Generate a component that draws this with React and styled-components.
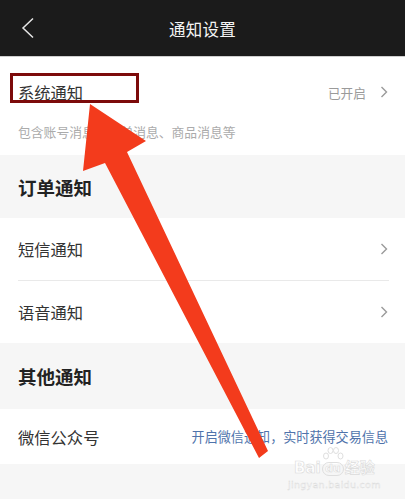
import React from 'react'
import styled, { createGlobalStyle } from 'styled-components'

const Global = createGlobalStyle`
  html, body {
    margin: 0;
    padding: 0;
    background: #f6f6f6;
  }
  body {
    font-family: "Noto Sans CJK SC", "Noto Sans", sans-serif;
  }
`

function Chevron({ color = '#9a9a9a' }) {
  return (
    <svg width="8" height="12" viewBox="0 0 8 12">
      <polyline points="1.5,1 6.5,6 1.5,11" fill="none" stroke={color} strokeWidth="1.4" />
    </svg>
  )
}

function App() {
  return (
    <Page>
      <Global />
      <Header>
        <BackBtn>
          <svg width="14" height="22" viewBox="0 0 14 22">
            <polyline points="12,1.5 2,11 12,20.5" fill="none" stroke="#e6e6e6" strokeWidth="1.5" />
          </svg>
        </BackBtn>
        <Title>通知设置</Title>
      </Header>

      <SystemItem>
        <TitleRow>
          <ItemTitle>
            系统通知
            <Highlight />
          </ItemTitle>
          <Status>
            已开启
            <Chevron />
          </Status>
        </TitleRow>
        <Desc>包含账号消息、订单消息、商品消息等</Desc>
      </SystemItem>

      <GroupHeader $h={63}>订单通知</GroupHeader>
      <Row $h={62}>
        <ItemTitle>短信通知</ItemTitle>
        <Chevron />
      </Row>
      <Divider />
      <Row $h={62}>
        <ItemTitle>语音通知</ItemTitle>
        <Chevron />
      </Row>

      <GroupHeader $h={66}>其他通知</GroupHeader>
      <Row $h={55}>
        <ItemTitle>微信公众号</ItemTitle>
        <LinkText>开启微信通知，实时获得交易信息</LinkText>
      </Row>

      <Arrow width="405" height="499" viewBox="0 0 405 499">
        <polygon
          points="90,104 146,141 127,152 268,451 259,458 105,163 83,171"
          fill="#f33b1c"
        />
      </Arrow>

      <Watermark>
        <Logo>
          <span>Bai</span>
          <Paw>
            <svg width="22" height="16" viewBox="0 0 22 16">
              <g fill="#fff" stroke="#dcdcdc" strokeWidth="1">
                <ellipse cx="4" cy="10" rx="2.5" ry="3" />
                <ellipse cx="8.5" cy="4.5" rx="2.5" ry="3" />
                <ellipse cx="14" cy="4.5" rx="2.5" ry="3" />
                <ellipse cx="18.5" cy="10" rx="2.5" ry="3" />
              </g>
            </svg>
            <PawText>du</PawText>
          </Paw>
          <span>经验</span>
        </Logo>
        <Site>jingyan.baidu.com</Site>
      </Watermark>
    </Page>
  )
}

export default App

const Page = styled.div`
  position: relative;
  width: 405px;
  height: 499px;
  overflow: hidden;
  background: #f6f6f6;
`

const Header = styled.div`
  height: 56px;
  background: #1b1b1b;
  border-bottom: 1px solid #cfcfcf;
  display: flex;
  align-items: center;
  justify-content: center;
  position: relative;
`

const BackBtn = styled.div`
  position: absolute;
  left: 21px;
  top: 17px;
  display: flex;
`

const Title = styled.div`
  color: #f4f4f4;
  font-size: 16.5px;
  letter-spacing: 0.2px;
  margin-top: 1px;
`

const SystemItem = styled.div`
  background: #fff;
  padding: 24px 17px 14px 18px;
`

const TitleRow = styled.div`
  display: flex;
  align-items: center;
  justify-content: space-between;
  height: 22px;
`

const ItemTitle = styled.div`
  position: relative;
  color: #333;
  font-size: 16.3px;
  line-height: 22px;
`

const Highlight = styled.div`
  position: absolute;
  left: -8px;
  top: -8px;
  width: 129px;
  height: 30px;
  box-sizing: border-box;
  border: 3px solid #7c0a0a;
`

const Status = styled.div`
  display: flex;
  align-items: center;
  gap: 14px;
  color: #9a9a9a;
  font-size: 12.7px;
`

const Desc = styled.div`
  margin-top: 20px;
  color: #ababab;
  font-size: 12.8px;
  line-height: 18px;
`

const GroupHeader = styled.div`
  height: ${p => p.$h}px;
  display: flex;
  align-items: center;
  padding-left: 18px;
  color: #222;
  font-size: 18.5px;
  font-weight: 700;
  background: #f6f6f6;
`

const Row = styled.div`
  height: ${p => p.$h}px;
  display: flex;
  align-items: center;
  justify-content: space-between;
  padding: 0 17px 0 18px;
  background: #fff;
`

const Divider = styled.div`
  height: 1px;
  background: #fff;
  &::after {
    content: '';
    display: block;
    height: 1px;
    margin: 0 16px 0 18px;
    background: #e9e9e9;
  }
`

const LinkText = styled.div`
  color: #4f73ab;
  font-size: 13.1px;
`

const Arrow = styled.svg`
  position: absolute;
  left: 0;
  top: 0;
  pointer-events: none;
`

const Watermark = styled.div`
  position: absolute;
  left: 288px;
  top: 446px;
  display: flex;
  flex-direction: column;
  align-items: center;
  color: #fff;
  -webkit-text-stroke: 0.6px #d8d8d8;
  font-family: "DejaVu Sans", "Noto Sans CJK SC", sans-serif;
  opacity: 0.9;
`

const Logo = styled.div`
  display: flex;
  align-items: flex-end;
  gap: 1px;
  font-size: 15px;
  font-weight: 700;
  line-height: 16px;
`

const Paw = styled.div`
  display: flex;
  flex-direction: column;
  align-items: center;
`

const PawText = styled.span`
  font-size: 11px;
  line-height: 12px;
  border: 1px solid #dcdcdc;
  border-radius: 7px;
  padding: 0 2px;
`

const Site = styled.div`
  margin-top: 3px;
  font-size: 9.5px;
  letter-spacing: 0.3px;
  -webkit-text-stroke: 0.4px #d8d8d8;
`
